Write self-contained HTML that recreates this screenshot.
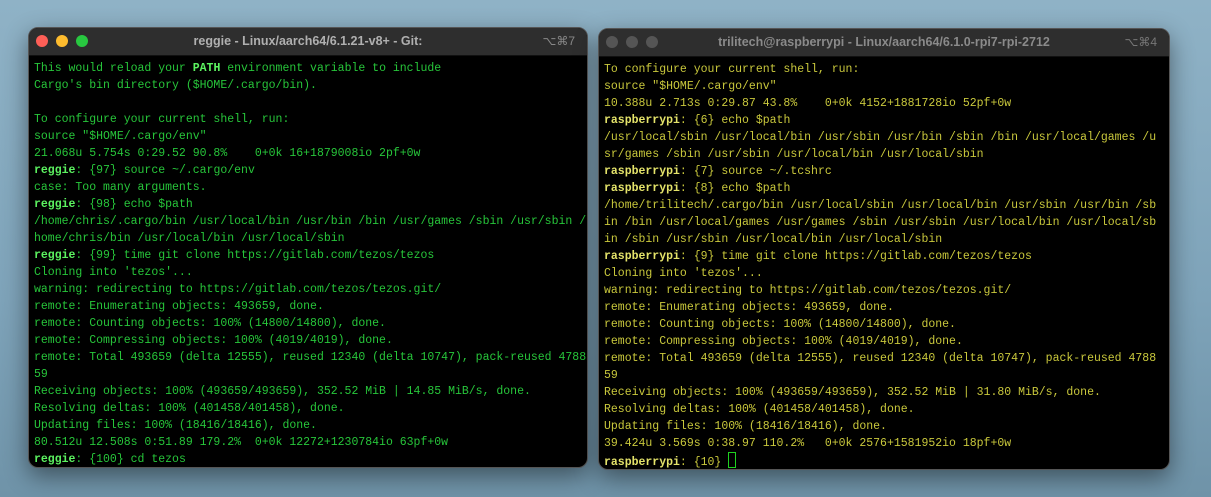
<!DOCTYPE html>
<html><head><meta charset="utf-8"><style>
html,body{margin:0;padding:0;width:1211px;height:497px;overflow:hidden;background:linear-gradient(180deg,#8fb2c6 0%,#7ea3b9 60%,#6f93a8 100%);font-family:"Liberation Sans",sans-serif}
.win{position:absolute;background:#000;border-radius:10px;border:1px solid #555;box-shadow:0 8px 24px rgba(0,0,0,.45);overflow:hidden}
.tb{height:27px;background:#2e2e2e;border-bottom:1px solid #111;position:relative;color:#b0b0b0;font-size:12.5px;font-weight:bold;text-align:center;line-height:27px}
.dots{position:absolute;left:7px;top:7px;display:flex;line-height:0}
.dots span{display:block;width:12px;height:12px;border-radius:50%;margin-right:8px}
.sc{position:absolute;right:12px;top:0;font-weight:normal;color:#888;font-size:12px}
pre{margin:0;padding:4px 0 0 5px;font-family:"Liberation Mono",monospace;font-size:11.5px;line-height:17px;white-space:pre}
.g{color:#27c63a}.g b{color:#5cf260}
.y{color:#c9c83c}.y b{color:#e4e36a}
.cur{display:inline-block;width:6px;height:14px;border:1px solid #1fd21f;vertical-align:-3px}
</style></head><body>
<div class="win" style="left:28px;top:27px;width:558px;height:439px">
<div class="tb"><div class="dots"><span style="background:#fe5f57"></span><span style="background:#febc2e"></span><span style="background:#28c840"></span></div>reggie - Linux/aarch64/6.1.21-v8+ - Git:<span class="sc">⌥⌘7</span></div>
<pre class="g">This would reload your <b>PATH</b> environment variable to include
Cargo's bin directory ($HOME/.cargo/bin).

To configure your current shell, run:
source "$HOME/.cargo/env"
21.068u 5.754s 0:29.52 90.8%    0+0k 16+1879008io 2pf+0w
<b>reggie</b>: {97} source ~/.cargo/env
case: Too many arguments.
<b>reggie</b>: {98} echo $path
/home/chris/.cargo/bin /usr/local/bin /usr/bin /bin /usr/games /sbin /usr/sbin /
home/chris/bin /usr/local/bin /usr/local/sbin
<b>reggie</b>: {99} time git clone https://gitlab.com/tezos/tezos
Cloning into 'tezos'...
warning: redirecting to https://gitlab.com/tezos/tezos.git/
remote: Enumerating objects: 493659, done.
remote: Counting objects: 100% (14800/14800), done.
remote: Compressing objects: 100% (4019/4019), done.
remote: Total 493659 (delta 12555), reused 12340 (delta 10747), pack-reused 4788
59
Receiving objects: 100% (493659/493659), 352.52 MiB | 14.85 MiB/s, done.
Resolving deltas: 100% (401458/401458), done.
Updating files: 100% (18416/18416), done.
80.512u 12.508s 0:51.89 179.2%  0+0k 12272+1230784io 63pf+0w
<b>reggie</b>: {100} cd tezos</pre>
</div>
<div class="win" style="left:598px;top:28px;width:570px;height:440px">
<div class="tb"><div class="dots"><span style="background:#555"></span><span style="background:#555"></span><span style="background:#555"></span></div><span style="color:#8a8a8a">trilitech@raspberrypi - Linux/aarch64/6.1.0-rpi7-rpi-2712</span><span class="sc" style="color:#777">⌥⌘4</span></div>
<pre class="y">To configure your current shell, run:
source "$HOME/.cargo/env"
10.388u 2.713s 0:29.87 43.8%    0+0k 4152+1881728io 52pf+0w
<b>raspberrypi</b>: {6} echo $path
/usr/local/sbin /usr/local/bin /usr/sbin /usr/bin /sbin /bin /usr/local/games /u
sr/games /sbin /usr/sbin /usr/local/bin /usr/local/sbin
<b>raspberrypi</b>: {7} source ~/.tcshrc
<b>raspberrypi</b>: {8} echo $path
/home/trilitech/.cargo/bin /usr/local/sbin /usr/local/bin /usr/sbin /usr/bin /sb
in /bin /usr/local/games /usr/games /sbin /usr/sbin /usr/local/bin /usr/local/sb
in /sbin /usr/sbin /usr/local/bin /usr/local/sbin
<b>raspberrypi</b>: {9} time git clone https://gitlab.com/tezos/tezos
Cloning into 'tezos'...
warning: redirecting to https://gitlab.com/tezos/tezos.git/
remote: Enumerating objects: 493659, done.
remote: Counting objects: 100% (14800/14800), done.
remote: Compressing objects: 100% (4019/4019), done.
remote: Total 493659 (delta 12555), reused 12340 (delta 10747), pack-reused 4788
59
Receiving objects: 100% (493659/493659), 352.52 MiB | 31.80 MiB/s, done.
Resolving deltas: 100% (401458/401458), done.
Updating files: 100% (18416/18416), done.
39.424u 3.569s 0:38.97 110.2%   0+0k 2576+1581952io 18pf+0w
<b>raspberrypi</b>: {10} <span class="cur"></span></pre>
</div>
</body></html>
